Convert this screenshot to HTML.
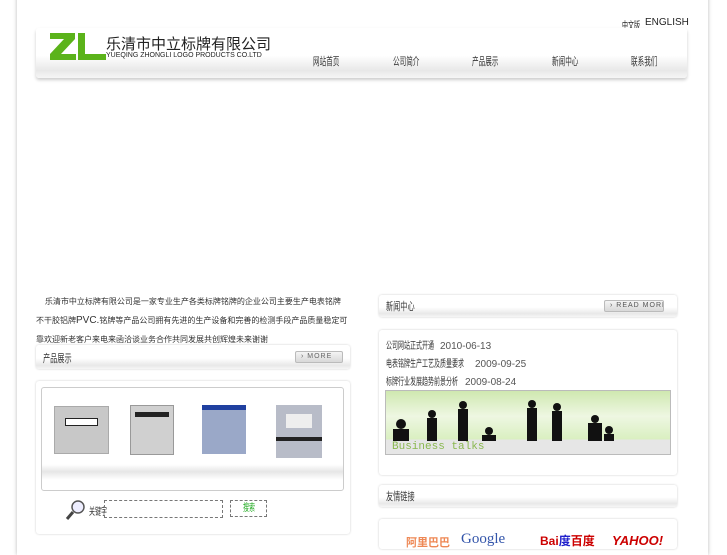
<!DOCTYPE html>
<html><head><meta charset="utf-8"><style>
*{margin:0;padding:0;box-sizing:border-box}
body{width:727px;height:545px;overflow:hidden;background:#fff;font-family:"Liberation Sans","Noto Sans CJK SC",sans-serif;font-size:11px;color:#333;position:relative}
#frame{position:absolute;left:17px;top:-5px;width:691px;height:560px;background:#fff;box-shadow:0 0 4px #bbb}
.abs{position:absolute}
.box{position:absolute;border-radius:3px;box-shadow:0 0 2px #ccc;background:#fff}
.hd{background:linear-gradient(#fff 55%,#e8e8e8 85%,#f6f6f6)}
.ttl{position:absolute;font-size:11px;color:#333;transform:scaleX(0.65);transform-origin:0 0;white-space:nowrap}
.sq{display:inline-block;transform:scaleX(0.6);transform-origin:0 0;white-space:nowrap}
.btn{position:absolute;height:12px;border:1px solid #bbb;border-radius:2px;background:linear-gradient(#f4f4f4,#d8d8d8);font-size:7px;color:#666;line-height:10px;padding-left:5px;letter-spacing:1px;white-space:nowrap;overflow:hidden}
.nl{height:18px;position:relative}
.nl .sq{position:absolute;left:0;top:0}
.nl .d{position:absolute;top:0;color:#555}
</style></head><body>
<div id="frame"></div>
 <div class="abs" style="left:622px;top:17px;font-size:10px;color:#222;white-space:nowrap"><span class="sq" style="position:absolute;left:0">中文版</span><span style="position:absolute;left:23px">ENGLISH</span></div>
 <div class="box hd" style="left:36px;top:28px;width:651px;height:50px;box-shadow:0 2px 3px #ccc"></div>
 <svg class="abs" style="left:49px;top:31px" width="58" height="30"><polygon points="1,2 26,2 26,8 12,23 27,23 27,29 1,29 1,23 15,8 1,8" fill="#5bb31a"/><polygon points="29,2 36,2 36,23 57,23 57,29 29,29" fill="#5bb31a"/></svg>
 <div class="abs" style="left:106px;top:33px;font-size:15px;color:#222;white-space:nowrap">乐清市中立标牌有限公司</div>
 <div class="abs" style="left:106px;top:52px;font-size:7px;color:#222;white-space:nowrap">YUEQING ZHONGLI LOGO PRODUCTS CO.LTD</div>
 <div class="abs" style="left:313px;top:53px;font-size:11px;width:380px">
  <span class="sq" style="position:absolute;left:0">网站首页</span><span class="sq" style="position:absolute;left:80px">公司简介</span><span class="sq" style="position:absolute;left:159px">产品展示</span><span class="sq" style="position:absolute;left:239px">新闻中心</span><span class="sq" style="position:absolute;left:318px">联系我们</span></div>

 <div class="abs" style="left:36px;top:292px;width:312px;font-size:8px;line-height:19px;color:#333">&nbsp;&nbsp;&nbsp;&nbsp;乐清市中立标牌有限公司是一家专业生产各类标牌铭牌的企业公司主要生产电表铭牌不干胶铝牌<span style="font-size:10px">PVC.</span>铭牌等产品公司拥有先进的生产设备和完善的检测手段产品质量稳定可靠欢迎新老客户来电来函洽谈业务合作共同发展共创辉煌未来谢谢</div>

 <div class="box hd" style="left:36px;top:345px;width:314px;height:24px"></div>
 <div class="ttl" style="left:43px;top:350px">产品展示</div>
 <div class="btn" style="left:295px;top:351px;width:48px">› MORE</div>
 <div class="box" style="left:36px;top:381px;width:314px;height:153px"></div>
 <div class="abs" style="left:41px;top:387px;width:303px;height:104px;border:1px solid #ccc;border-radius:3px;background:linear-gradient(#fff 75%,#e6e6e6 82%,#fff 90%)"></div>
 <div class="abs" style="left:54px;top:406px;width:55px;height:48px;background:#c8c8c8;border:1px solid #aaa"><div style="margin:11px 10px;height:8px;background:#fff;border:1px solid #222"></div></div>
 <div class="abs" style="left:130px;top:405px;width:44px;height:50px;background:#d0d0d0;border:1px solid #999"><div style="margin:6px 4px;height:5px;background:#222"></div></div>
 <div class="abs" style="left:202px;top:405px;width:44px;height:49px;background:#9aa8c8;border-top:5px solid #2040a0"></div>
 <div class="abs" style="left:276px;top:405px;width:46px;height:53px;background:#b8bcc8"><div style="margin:9px 10px;height:14px;background:#eee"></div><div style="height:4px;background:#222"></div></div>
 <svg class="abs" style="left:65px;top:499px" width="22" height="22"><circle cx="13" cy="8" r="6" fill="#eef" stroke="#555" stroke-width="1.5"/><line x1="8" y1="13" x2="2" y2="20" stroke="#444" stroke-width="3"/></svg>
 <div class="abs" style="left:89px;top:503px;font-size:10px"><span class="sq">关键字</span></div>
 <div class="abs" style="left:104px;top:500px;width:119px;height:18px;border:1px dashed #777"></div>
 <div class="abs" style="left:230px;top:500px;width:37px;height:17px;border:1px dashed #777;color:#2a2;font-size:10px;line-height:15px"><span class="sq" style="position:absolute;left:12px">搜索</span></div>

 <div class="box hd" style="left:379px;top:295px;width:298px;height:22px"></div>
 <div class="ttl" style="left:386px;top:298px">新闻中心</div>
 <div class="btn" style="left:604px;top:300px;width:60px;color:#555">› READ MORE</div>
 <div class="box" style="left:379px;top:330px;width:298px;height:145px"></div>
 <div class="abs" style="left:386px;top:338px;width:280px;font-size:10px;line-height:18px;color:#333">
  <div class="nl"><span class="sq">公司网站正式开通</span><span class="d" style="left:54px">2010-06-13</span></div>
  <div class="nl"><span class="sq">电表铭牌生产工艺及质量要求</span><span class="d" style="left:89px">2009-09-25</span></div>
  <div class="nl"><span class="sq">标牌行业发展趋势前景分析</span><span class="d" style="left:79px">2009-08-24</span></div></div>
 <div class="abs" style="left:385px;top:390px;width:286px;height:65px;border:1px solid #bbb;background:linear-gradient(#cfe8b0,#eef7e2 40%,#d9efc0 77%,#e6e6e6 77%)">
  <svg width="284" height="50" style="position:absolute;top:0;left:0"><g fill="#111"><circle cx="15" cy="33" r="5"/><rect x="7" y="38" width="16" height="12"/><circle cx="46" cy="23" r="4"/><rect x="41" y="27" width="10" height="23"/><circle cx="77" cy="14" r="4"/><rect x="72" y="18" width="10" height="32"/><circle cx="103" cy="40" r="4"/><rect x="96" y="44" width="14" height="6"/><circle cx="146" cy="13" r="4"/><rect x="141" y="17" width="10" height="33"/><circle cx="171" cy="16" r="4"/><rect x="166" y="20" width="10" height="30"/><circle cx="209" cy="28" r="4"/><rect x="202" y="32" width="14" height="18"/><circle cx="223" cy="39" r="4"/><rect x="218" y="43" width="10" height="7"/></g></svg>
  <div style="position:absolute;left:6px;top:50px;font-family:'Liberation Mono',monospace;font-size:11px;color:#8ab850">Business talks</div></div>

 <div class="box hd" style="left:379px;top:485px;width:298px;height:22px"></div>
 <div class="ttl" style="left:386px;top:488px">友情链接</div>
 <div class="box" style="left:379px;top:519px;width:298px;height:30px"></div>
 <div class="abs" style="left:406px;top:534px;font-size:11px;color:#e85;font-weight:bold">阿里巴巴</div>
 <div class="abs" style="left:461px;top:531px;font-size:15px;color:#3355aa;font-family:'Liberation Serif',serif">Google</div>
 <div class="abs" style="left:540px;top:532px;font-size:12px;color:#c00;font-weight:bold">Bai<span style="color:#22c">度</span>百度</div>
 <div class="abs" style="left:612px;top:533px;font-size:13px;color:#c00;font-weight:bold;font-style:italic">YAHOO!</div>
</body></html>
